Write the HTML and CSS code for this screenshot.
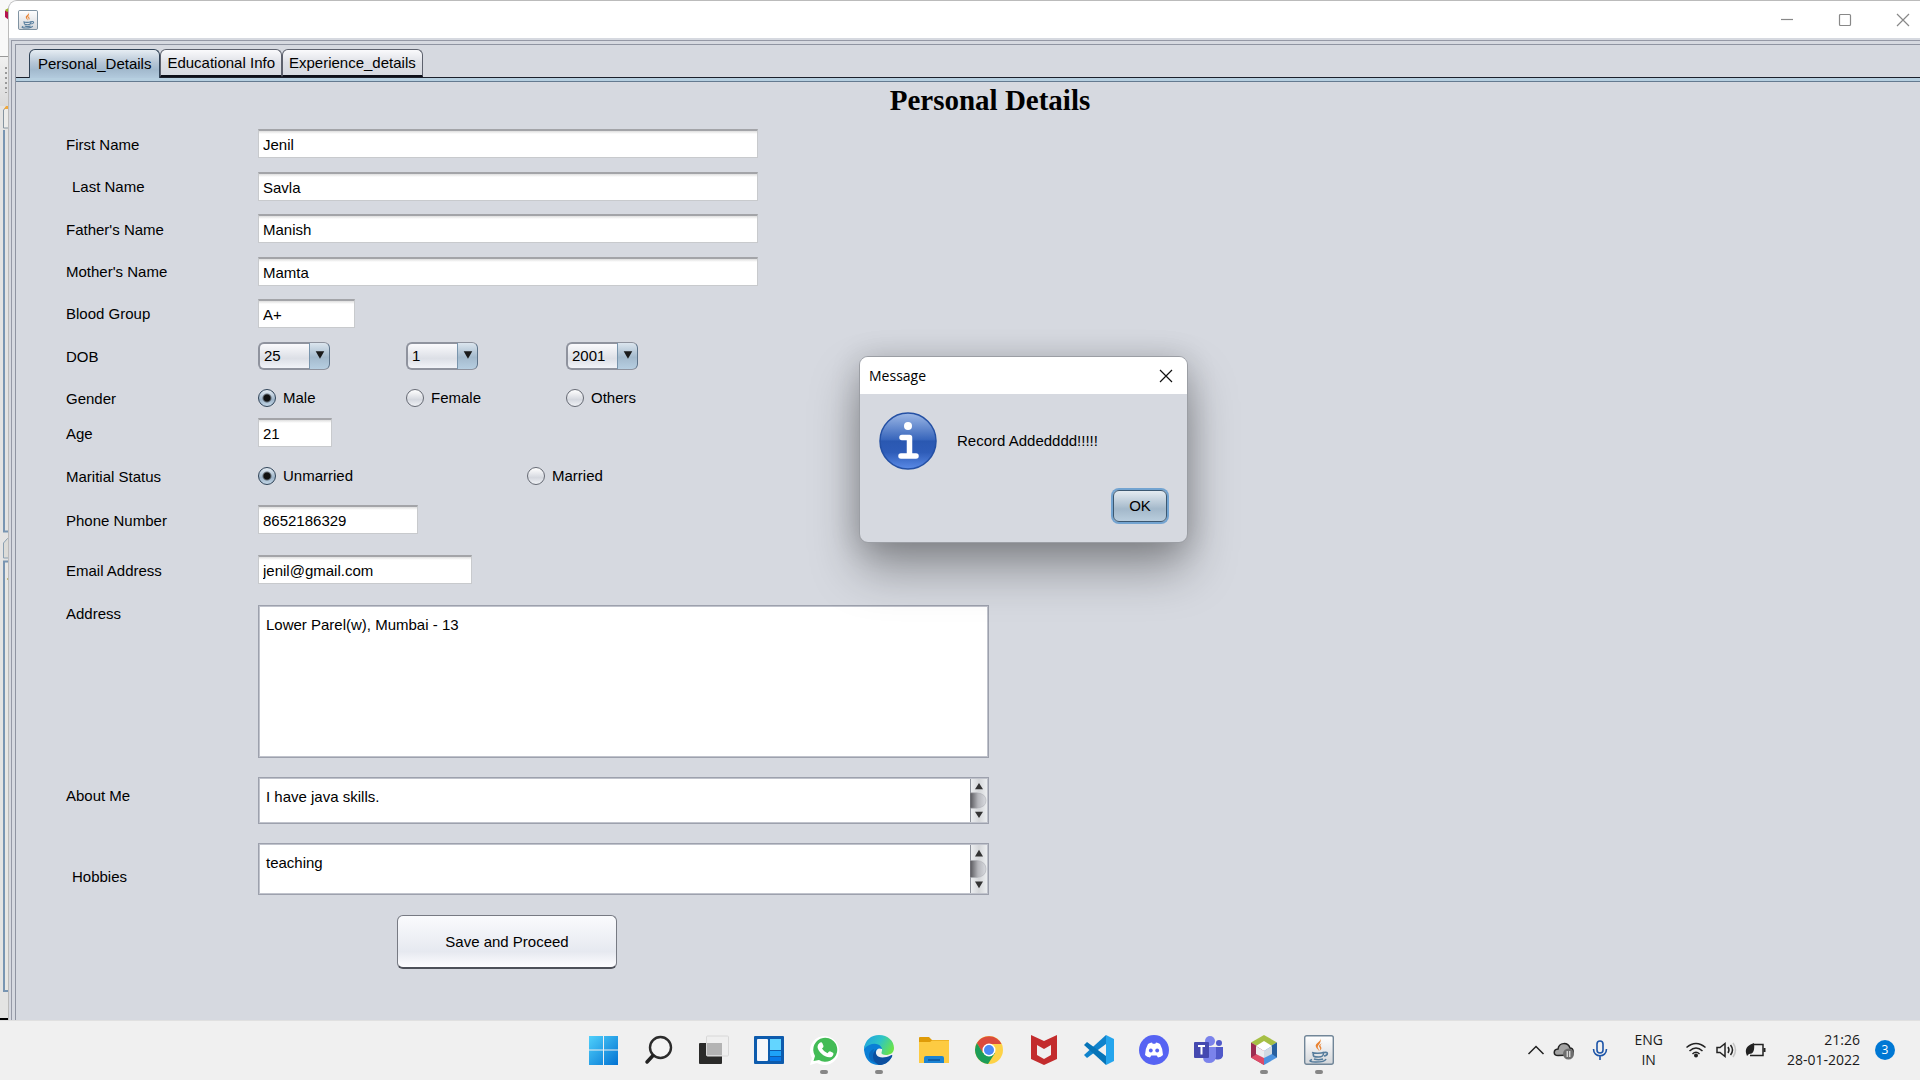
FILE: index.html
```html
<!DOCTYPE html>
<html lang="en">
<head>
<meta charset="utf-8">
<title>Personal Details</title>
<link rel="stylesheet" href="styles.css">
</head>
<body>
<div class="desktop">
  <div class="workspace">
    <div class="behind">
      <svg class="behind-art" width="20" height="1020" viewBox="0 0 20 1020" aria-hidden="true">
        <defs><linearGradient id="tb" x1="0" y1="0" x2="0" y2="1"><stop offset="0" stop-color="#f0f0f0"/><stop offset="1" stop-color="#dadada"/></linearGradient></defs>
        <rect width="20" height="1020" fill="#e4e4e3"/>
        <rect width="20" height="56" fill="#f8f8f8"/>
        <path d="M5 11l4-3v12l-4-3z" fill="#b5124e"/><path d="M5 10l7-4v4l-5 2z" fill="#9cb82e"/>
        <rect x="8" y="38" width="3" height="11" fill="#c9a57c"/>
        <rect y="56" width="20" height="1" fill="#999"/>
        <rect y="57" width="20" height="49" fill="url(#tb)"/>
        <path d="M6 67v26" stroke="#999" stroke-width="2" stroke-dasharray="2 3"/>
        <path d="M3.500 128v-18l3-3h8v21z" fill="#ececea" stroke="#8594a0"/>
        <path d="M4 109l2-3h8v3z" fill="#f0a93c"/>
        <path d="M4 130v401.500h12" fill="none" stroke="#7895b2" stroke-width="2"/>
        <path d="M3.500 558v-15l4-4.500h8v19.500z" fill="#dcdcd8" stroke="#8aa0b2"/>
        <path d="M14 561.500H4V991h12" fill="none" stroke="#7895b2" stroke-width="2"/>
        <rect x="5" y="563" width="15" height="427" fill="#e8e7e4"/>
        <path d="M8 567h1" stroke="#2b2bb5" stroke-width="2"/><path d="M7 579h2" stroke="#bab77c" stroke-width="2"/>
        <rect y="1018" width="9" height="2" fill="#000"/>
      </svg>
    </div>
    <main class="window">
      <header class="titlebar">
        <svg class="app-icon" width="20" height="20" viewBox="0 0 30 30" aria-hidden="true"><use href="#java"/></svg>
        <div class="window-controls">
          <button type="button" aria-label="Minimize"><svg width="14" height="14" viewBox="0 0 14 14"><path d="M1 6.500h12"/></svg></button>
          <button type="button" aria-label="Maximize"><svg width="14" height="14" viewBox="0 0 14 14"><rect x="1.500" y="1.500" width="11" height="11" rx="1"/></svg></button>
          <button type="button" aria-label="Close"><svg width="14" height="14" viewBox="0 0 14 14"><path d="M1 1l12 12M13 1L1 13"/></svg></button>
        </div>
      </header>
      <div class="frame">
        <div class="pane">
          <nav class="tabs" role="tablist">
            <button type="button" class="tab tab--active" role="tab" aria-selected="true">Personal_Details</button>
            <button type="button" class="tab" role="tab" aria-selected="false">Educational Info</button>
            <button type="button" class="tab" role="tab" aria-selected="false">Experience_details</button>
          </nav>
          <div class="tab-rule"></div>
          <h1 class="heading">Personal Details</h1>
          <form class="form">
            <label for="first">First Name</label>
            <input class="field w-name" id="first" type="text" value="Jenil">
            <label class="indent" for="last">Last Name</label>
            <input class="field w-name" id="last" type="text" value="Savla">
            <label for="father">Father's Name</label>
            <input class="field w-name" id="father" type="text" value="Manish">
            <label for="mother">Mother's Name</label>
            <input class="field w-name" id="mother" type="text" value="Mamta">
            <label for="blood">Blood Group</label>
            <input class="field w-blood" id="blood" type="text" value="A+">
            <label for="day">DOB</label>
            <div class="choices">
              <span class="combo"><select id="day"><option>25</option></select><svg class="combo-arrow" viewBox="0 0 20 26" aria-hidden="true"><path d="M6 8h9l-4.500 8z"/></svg></span>
              <span class="combo"><select aria-label="Month"><option>1</option></select><svg class="combo-arrow" viewBox="0 0 20 26" aria-hidden="true"><path d="M6 8h9l-4.500 8z"/></svg></span>
              <span class="combo"><select aria-label="Year"><option>2001</option></select><svg class="combo-arrow" viewBox="0 0 20 26" aria-hidden="true"><path d="M6 8h9l-4.500 8z"/></svg></span>
            </div>
            <span class="label">Gender</span>
            <div class="choices">
              <label class="option"><input type="radio" name="gender" checked>Male</label>
              <label class="option"><input type="radio" name="gender">Female</label>
              <label class="option"><input type="radio" name="gender">Others</label>
            </div>
            <label for="age">Age</label>
            <input class="field w-age" id="age" type="text" value="21">
            <span class="label">Maritial Status</span>
            <div class="choices choices--wide">
              <label class="option"><input type="radio" name="status" checked>Unmarried</label>
              <label class="option"><input type="radio" name="status">Married</label>
            </div>
            <label for="phone">Phone Number</label>
            <input class="field w-phone" id="phone" type="text" value="8652186329">
            <label for="email">Email Address</label>
            <input class="field w-email" id="email" type="text" value="jenil@gmail.com">
            <label class="top" for="address">Address</label>
            <div class="area area--tall"><textarea id="address">Lower Parel(w), Mumbai - 13</textarea></div>
            <label class="top about" for="about">About Me</label>
            <div class="area area--about"><textarea id="about">I have java skills.</textarea>
              <svg class="scroll" viewBox="0 0 18 44" preserveAspectRatio="none" aria-hidden="true"><use href="#scroll"/></svg></div>
            <label class="indent" for="hobbies">Hobbies</label>
            <div class="area area--hobbies"><textarea id="hobbies">teaching</textarea>
              <svg class="scroll" viewBox="0 0 18 44" preserveAspectRatio="none" aria-hidden="true"><use href="#scroll"/></svg></div>
            <button class="save" type="button">Save and Proceed</button>
          </form>
        </div>
      </div>
      <section class="dialog" role="dialog" aria-labelledby="dlg-title">
        <header class="dialog-bar">
          <span id="dlg-title">Message</span>
          <button type="button" aria-label="Close"><svg width="14" height="14" viewBox="0 0 14 14"><path d="M1 1l12 12M13 1L1 13"/></svg></button>
        </header>
        <div class="dialog-body">
          <svg width="58" height="58" viewBox="0 0 58 58" aria-hidden="true">
            <defs><linearGradient id="info" x1="0" y1="0" x2="0" y2="1"><stop offset="0" stop-color="#9db8e6"/><stop offset=".48" stop-color="#3765bb"/><stop offset=".5" stop-color="#2a58b1"/><stop offset=".7" stop-color="#2e5cb8"/><stop offset="1" stop-color="#5a8ae6"/></linearGradient></defs>
            <circle cx="29" cy="29" r="28" fill="url(#info)" stroke="#2450a4" stroke-width="1.500"/>
            <circle cx="29" cy="14" r="4" fill="#fff"/>
            <path d="M23 25.500h7.500V44M22 44h15" fill="none" stroke="#fff" stroke-width="5.500" stroke-linecap="round" stroke-linejoin="round"/>
          </svg>
          <p>Record Addedddd!!!!!</p>
        </div>
        <footer class="dialog-foot"><button class="ok" type="button">OK</button></footer>
      </section>
    </main>
  </div>

  <footer class="taskbar">
    <div class="apps">
      <button type="button" aria-label="Start"><svg viewBox="0 0 30 30"><defs><linearGradient id="win" x1="0" y1="0" x2="1" y2="1"><stop offset="0" stop-color="#4fd0fb"/><stop offset="1" stop-color="#0272d2"/></linearGradient></defs><path fill="url(#win)" d="M0 1h14v13.500H0zM15 1h14v13.500H15zM0 15.500h14V30H0zM15 15.500h14V30H15z"/></svg></button>
      <button type="button" aria-label="Search"><svg viewBox="0 0 30 30"><circle cx="16.500" cy="12.500" r="10.500" fill="#f4f4f4" stroke="#2c2c2c" stroke-width="2.400"/><path d="M9 20.500l-6 6.500" stroke="#222" stroke-width="3.500" stroke-linecap="round"/></svg></button>
      <button type="button" aria-label="Task view"><svg viewBox="0 0 30 30"><rect y="8" width="23" height="21" rx="1" fill="#2a2a29"/><rect x="7.500" y="1" width="22" height="20" rx="1" fill="#eee" fill-opacity=".88" stroke="#d8d8d8"/><path d="M8 8h15v12H8z" fill="#aaa" fill-opacity=".8"/></svg></button>
      <button type="button" aria-label="Widgets"><svg viewBox="0 0 30 30"><rect y="1" width="30" height="28" rx="1" fill="#0d5bad"/><rect x="3" y="4" width="11" height="22" rx="1" fill="#f5f6fa"/><path fill="#63d5ff" d="M16 4h11v11H16z"/><path fill="#1da2f8" d="M16 16h11v5H16z"/><path fill="#0879e8" d="M16 22h11v4H16z"/></svg></button>
      <button type="button" class="running" aria-label="WhatsApp"><svg viewBox="0 0 30 30"><path d="M1 30l2-7A14.500 14.500 0 1 1 8 28z" fill="#fff"/><path d="M4.500 26l1.500-5A12 12 0 1 1 10 25z" fill="#43bc56"/><path d="M10.500 8q2-1.500 3 .5l1 2.500q.3 1-1.500 2.500 2 3.500 5.500 4.800 1.800-2.500 3-1.800l2.500 1.200c1 .6.200 3.300-1.500 4.200C17 24 9 17 8.500 12q0-2.500 2-4z" fill="#fff"/></svg></button>
      <button type="button" class="running" aria-label="Edge"><svg viewBox="0 0 30 30"><defs><linearGradient id="eg" x1="0" y1=".2" x2="1" y2=".6"><stop offset="0" stop-color="#1fa3e0"/><stop offset=".5" stop-color="#2ec4c6"/><stop offset="1" stop-color="#6be448"/></linearGradient></defs><path d="M0 15C0 6 8 5 14 8q5 3 4 6-5-2-6 3-1 8 8 8 4 0 8-3Q23 30 15 30 2 30 0 15z" fill="#0a7fd6"/><path d="M10 14c-2 5 1 12 9 13-7 3-14-1-14-6 0-4 2-6 5-7z" fill="#0a68bd"/><path d="M12.500 14c-3 6 3 12 15 6 1.500 0 .5 2 0 2.500C23 30 17 30 15 30 8 27 7 18 12.500 14z" fill="#0c4f9f"/><path d="M0 14C1 5 7 0 15 0c9 0 15 6 15 13 0 5-4 7-8 7-3 0-5-1-4.500-2.500C21 10 9 4 0 14z" fill="url(#eg)"/></svg></button>
      <button type="button" aria-label="File Explorer"><svg viewBox="0 0 30 30"><path d="M0 3q0-1 1-1h9l3 3h17v8H0z" fill="#df9b08"/><path d="M0 7h11l2-1.500h17V28H0z" fill="#fdcb42"/><path d="M5 28v-5q0-2 2-2h16q2 0 2 2v5z" fill="#1b83d3"/><path d="M9 25h12" stroke="#0b5299" stroke-width="1.500"/></svg></button>
      <button type="button" aria-label="Chrome"><svg viewBox="0 0 30 30"><circle cx="15" cy="15" r="14" fill="#fdd247"/><path d="M2.900 8A14 14 0 0 1 27.500 9H15L8 17z" fill="#db4b3c"/><path d="M2.900 8A14 14 0 0 0 14 29l7-11H9z" fill="#1c9d58"/><circle cx="15" cy="15" r="6.500" fill="#fff"/><circle cx="15" cy="15" r="5" fill="#4a8af4"/></svg></button>
      <button type="button" aria-label="McAfee"><svg viewBox="0 0 30 30"><path fill="#c32c2d" fill-rule="evenodd" d="M2 0l13 6 13-6v24l-13 6-13-6zM8 10v10l7 4 7-4V10l-7 4z"/></svg></button>
      <button type="button" aria-label="Visual Studio Code"><svg viewBox="0 0 30 30"><path d="M22 0L0 20l3 3 19-14z" fill="#1083cc"/><path d="M22 30L0 10l3-3 19 14z" fill="#0674b8"/><path d="M22 0l8 4v22l-8 4z" fill="#25a5ed"/></svg></button>
      <button type="button" aria-label="Discord"><svg viewBox="0 0 30 30"><circle cx="15" cy="15" r="15" fill="#5663f3"/><path d="M9 9q2-1.500 4-1.500l.7 1.200h2.600l.7-1.200q2 0 4 1.500 3 5 3 11-2 2-5 2.500l-1.300-2h-5.400l-1.300 2Q8 22 6 20q0-6 3-11z" fill="#fff"/><circle cx="11.800" cy="15.500" r="1.900" fill="#5663f3"/><circle cx="18.200" cy="15.500" r="1.900" fill="#5663f3"/></svg></button>
      <button type="button" aria-label="Teams"><svg viewBox="0 0 30 30"><circle cx="16" cy="6" r="5" fill="#7b83eb"/><circle cx="25" cy="8" r="3" fill="#5059c9"/><path d="M20 12h9v9q-2 5-8 3z" fill="#5059c9"/><path d="M9 12h13v10q-1 6-7 6t-6-6z" fill="#7b83eb"/><rect y="7" width="15" height="16" rx="1" fill="#4549b0"/><path d="M4 11h7M7.500 11v8.500" stroke="#fff" stroke-width="2"/></svg></button>
      <button type="button" class="running" aria-label="NetBeans"><svg viewBox="0 0 30 30"><path d="M15 0l13 7.500-13 7.500L2 7.500z" fill="#a6bf45"/><path d="M2 7.500L15 15v15L2 22.500z" fill="#9c2b51"/><path d="M2 22.500l13-7.500v15z" fill="#de4a67"/><path d="M28 7.500v15L15 30V15z" fill="#4c92df"/><path d="M28 7.500v15l-6-4V11z" fill="#285f9e"/><path d="M15 6l8 5-8 5-8-5z" fill="#fff"/><path d="M7 11l8 5v7l-8-4z" fill="#ececef"/><path d="M23 11l-8 5v7l8-4z" fill="#d2dae2"/></svg></button>
      <button type="button" class="running" aria-label="Java">
        <svg viewBox="0 0 30 30"><defs>
          <linearGradient id="jv" x1="0" y1="0" x2="0" y2="1"><stop offset="0" stop-color="#fff"/><stop offset="1" stop-color="#d3d6da"/></linearGradient>
          <g id="java"><rect x=".7" y=".7" width="28.600" height="28.600" rx="2" fill="url(#jv)" stroke="#718698" stroke-width="1.400"/><path d="M16 3c2 4-6 5-4 9 .5 1.500 2 2 3 4 0-3-2-3-1-5s4-4 2-8zM18.500 8c-4 2-4 3-2.500 5 .5 1.500 0 2-1 3 4-2 2-4 1.500-5s.5-2 2-3z" fill="#e98332"/><path d="M8 17.500c3 1.200 9 1 12-.3M9.500 18c-1 4 1 4 5 4s5-1 5-4M20 17.500c5-1 4 3 0 3.500M8 24.500c-8 3 12 4 14-.5M10 24c3 1 6 1 9 0" fill="none" stroke="#557c9c" stroke-width="1.600"/></g>
          <linearGradient id="thumb"><stop offset="0" stop-color="#55555a"/><stop offset=".5" stop-color="#b4b5ba"/><stop offset="1" stop-color="#d8dadf"/></linearGradient>
          <linearGradient id="track"><stop offset="0" stop-color="#eff1f3"/><stop offset=".5" stop-color="#d5d7da"/><stop offset="1" stop-color="#eff1f3"/></linearGradient>
          <g id="scroll"><path d="M0 0h18v44H0z" fill="url(#track)"/><path d="M.5 0v44" stroke="#8f939c"/><path d="M0 14.500h7q9 1 9 7.500t-9 7.500H0z" fill="url(#thumb)" stroke="#aaacb2" stroke-width=".5"/><path d="M5 11h8L9 5zM5 33h8l-4 6z" fill="#333"/></g>
        </defs><use href="#java"/></svg></button>
    </div>
    <div class="tray">
      <svg width="18" height="20" viewBox="0 0 18 20"><path class="line" d="M1.500 14L9 6.500l7.500 7.500"/></svg>
      <svg width="22" height="20" viewBox="0 0 22 20"><path d="M5 15.500c-5 0-5-6 0-6.500 1-7 10-7 12-1 4 0 4 6 1 7z" fill="#a3a3a3" stroke="#222" stroke-width="1.500"/><circle cx="15.500" cy="14" r="5.500" fill="#6e6e6e"/><path d="M14.200 11v6M16.800 11v6" stroke="#fff"/></svg>
      <svg class="mic" width="16" height="20" viewBox="0 0 16 20"><rect x="5" y="1" width="6" height="12" rx="3"/><path d="M1.500 9c0 9 13 9 13 0M8 15.500V20"/></svg>
      <div class="lang">ENG<br>IN</div>
      <svg width="22" height="20" viewBox="0 0 22 20"><g class="line"><path d="M1.500 7.500Q11-.5 20.500 7.500M4.500 11q6.500-6 13 0M7.500 14q3.500-3.500 7 0"/></g><circle cx="11" cy="15.500" r="2" fill="#222"/></svg>
      <svg width="22" height="20" viewBox="0 0 22 20"><path class="line" d="M2 7.500h3l5-4v13l-5-4H2zM13 7q2 3 0 6M15.500 5q4 5 0 10"/><path d="M18 3q5 7 0 14" fill="none" stroke="#c4c4c4" stroke-width="1.500"/></svg>
      <svg width="22" height="20" viewBox="0 0 22 20"><path class="line" d="M9 4.500h9v11H5"/><path d="M18.500 8h2v4h-2zM1 13C0 7 4 5 9 3c1 8-1 11-5 11l-2 2z" fill="#222"/></svg>
      <div class="clock">21:26<br>28-01-2022</div>
      <span class="badge">3</span>
    </div>
  </footer>
</div>
</body>
</html>
```
FILE: styles.css
```css
* { box-sizing: border-box; }
body {
  margin: 0;
  font: 15px/18px "Liberation Sans", Arial, sans-serif;
  color: #000;
  background: #d6d9e0;
}
button, input, select, textarea { font: inherit; color: inherit; }
button { cursor: pointer; }
.desktop { display: flex; flex-direction: column; min-height: 100vh; overflow: hidden; }
.workspace { display: flex; flex: 1; }

/* Sliver of the application behind the form window */
.behind { position: relative; width: 8px; background: #e4e4e3; }
.behind-art { position: absolute; top: 0; left: 0; }

.window {
  position: relative;
  flex: 1;
  display: flex;
  flex-direction: column;
  border: solid #bbb;
  border-width: 1px 0 0 1px;
  border-top-left-radius: 9px;
  background: #d6d9e0;
}
.titlebar {
  display: flex;
  justify-content: space-between;
  align-items: center;
  height: 37px;
  padding-left: 9px;
  background: #fff;
  border-top-left-radius: 8px;
}
.window-controls { display: flex; gap: 12px; }
.window-controls button {
  width: 46px;
  height: 36px;
  padding: 0;
  border: 0;
  background: none;
}
.window-controls button:last-child { width: 34px; margin-left: 6px; }
.window-controls svg { display: block; margin: auto; fill: none; stroke: #888; stroke-width: 1.2; }

.frame {
  flex: 1;
  display: flex;
  margin: 2px 0 0 2px;
  padding: 3px 0 0 3px;
  border: solid #9599a6;
  border-width: 1px 0 0 1px;
}
.pane { flex: 1; border: solid #8f94a1; border-width: 1px 0 0 1px; }

.tabs { display: flex; height: 33px; padding: 4px 0 0 13px; border-bottom: 1px solid #1c202b; }
.tab {
  height: 28px;
  padding: 1px 6px 0;
  border: 1px solid #5d616d;
  border-bottom: 2px solid #0c0e18;
  border-radius: 6px 6px 0 0;
  background: linear-gradient(#fafafc, #dfe1e7 50%, #d6d9e0);
  white-space: nowrap;
}
.tab--active {
  height: 29px;
  padding: 0 8px;
  border-color: #2f4155;
  border-bottom: 0;
  background: linear-gradient(#e6edf3, #b6c6d6 45%, #a2b9cd 70%, #b2cadd);
}
.tab-rule { height: 4px; background: #b6cfe0; border-bottom: 1px solid #647a90; }

.heading {
  margin: 0;
  padding: 2px 0 0 44px;
  font: bold 29px/32px "Liberation Serif", "Times New Roman", serif;
  text-align: center;
}
.form {
  display: grid;
  grid-template-columns: 192px minmax(0, 1fr);
  grid-template-rows: 43px 42px 43px 42px 42px 43px 41px 29px 58px 29px 71px 172px 66px 66px 60px;
  align-items: center;
  padding: 6px 0 0 50px;
}
.form > label, .form > .label { padding-top: 2px; }
.form > .indent { padding-left: 6px; }
.form > .top { align-self: start; padding-top: 0; }
.form > .about { padding-top: 10px; }
.field {
  height: 29px;
  padding: 1px 4px 0;
  border: 1px solid #c8cacd;
  border-top: 2px solid #a3a4a8;
  background: linear-gradient(#dedede, #fff 3px);
  outline: 0;
}
.w-name { width: 500px; }
.w-blood { width: 97px; }
.w-age { width: 74px; }
.w-phone { width: 160px; }
.w-email { width: 214px; }

.choices { display: grid; grid-template-columns: 148px 160px 148px; align-items: center; }
.choices--wide { grid-template-columns: 269px 148px; }
.combo { position: relative; width: 72px; height: 28px; }
.combo select {
  appearance: none;
  width: 100%;
  height: 100%;
  padding: 0 0 0 4px;
  border: 2px solid #8f939e;
  border-right-color: #5d7389;
  border-radius: 6px;
  background: linear-gradient(#fafafc, #dcdfe6 60%, #f1f3f8);
}
.combo-arrow {
  position: absolute;
  top: 1px;
  right: 1px;
  width: 20px;
  height: 26px;
  border-left: 1px solid #7995ad;
  border-radius: 0 5px 5px 0;
  background: linear-gradient(#dbe5ee, #a4bacd 55%, #b6cee1);
  pointer-events: none;
  fill: #1a1a1a;
}
.option { display: flex; align-items: center; gap: 7px; }
.option input {
  appearance: none;
  width: 18px;
  height: 18px;
  margin: 0;
  border: 1px solid #666a74;
  border-radius: 50%;
  background: linear-gradient(#fff, #d5d8df 60%, #f0f2f6);
}
.option input:checked {
  border-color: #2f4358;
  background: radial-gradient(circle, #111 3px, transparent 5px), linear-gradient(#e4ecf3, #9db4c9 60%, #c2d6e6);
}

.area {
  display: flex;
  align-self: start;
  width: 731px;
  max-width: 100%;
  border: 1px solid #9da1ad;
  outline: 1px solid #c0c3cc;
  outline-offset: -2px;
  background: #fff;
}
.area--tall { height: 153px; }
.area--about { height: 47px; }
.area--hobbies { height: 52px; }
.area textarea {
  flex: 1;
  padding: 10px 7px 0;
  border: 0;
  outline: 0;
  resize: none;
  overflow: hidden;
  background: none;
}
.scroll { width: 18px; height: 100%; }
.save {
  grid-column: 2;
  align-self: end;
  width: 220px;
  height: 54px;
  margin-left: 139px;
  border: 1px solid #777a83;
  border-bottom: 2px solid #4d5059;
  border-radius: 6px;
  background: linear-gradient(#fafbfd, #e6e9f0 70%, #fdfdff);
}

.dialog {
  position: absolute;
  top: 355px;
  left: 850px;
  width: 329px;
  border: 1px solid #9b9ea4;
  border-radius: 9px;
  background: #d6d9e0;
  box-shadow: 0 26px 48px 0 rgba(0, 0, 0, .34), 0 2px 30px rgba(0, 0, 0, .16);
}
.dialog-bar {
  display: flex;
  justify-content: space-between;
  align-items: center;
  height: 37px;
  padding: 0 14px 0 9px;
  border-radius: 8px 8px 0 0;
  background: #fff;
  font-family: "Open Sans", "Noto Sans", sans-serif;
  font-size: 14px;
}
.dialog-bar button { padding: 0; border: 0; background: none; }
.dialog-bar svg { display: block; fill: none; stroke: #111; stroke-width: 1.2; }
.dialog-body { display: flex; align-items: center; gap: 20px; padding: 18px 19px 0; }
.dialog-body p { margin: 0; }
.dialog-foot { display: flex; justify-content: flex-end; padding: 20px; }
.ok {
  width: 54px;
  height: 32px;
  padding: 0;
  border: 1px solid #3c5871;
  border-radius: 6px;
  background: linear-gradient(#e4ebf1, #a3b8ca 60%, #b9cddd);
  box-shadow: 0 0 0 2px #73a4d1;
}

.taskbar {
  display: grid;
  grid-template-columns: 1fr auto 1fr;
  align-items: center;
  height: 60px;
  padding-bottom: 1px;
  border-top: 1px solid #e0e0e0;
  background: #f0f0f0;
  font-family: "Open Sans", "Noto Sans", sans-serif;
  font-size: 14px;
  line-height: 20px;
  color: #1a1a1a;
}
.apps { grid-column: 2; display: flex; padding-left: 2px; }
.apps button {
  position: relative;
  width: 55px;
  height: 58px;
  padding: 0;
  border: 0;
  background: none;
}
.apps svg { display: block; width: 30px; height: 30px; margin: auto; }
.running::after {
  content: "";
  position: absolute;
  bottom: 5px;
  left: 24px;
  width: 8px;
  height: 4px;
  border-radius: 2px;
  background: #868686;
}
.tray { display: flex; justify-content: flex-end; align-items: center; padding-right: 25px; }
.tray .line { fill: none; stroke: #222; stroke-width: 1.5; }
.tray svg + svg { margin-left: 8px; }
.tray svg.mic { margin: 0 26px 0 17px; fill: none; stroke: #1c54a8; stroke-width: 1.6; }
.lang { margin-right: 22px; text-align: center; }
.clock { margin: 0 15px 0 20px; text-align: right; }
.badge {
  width: 20px;
  height: 20px;
  border-radius: 50%;
  background: #0078d4;
  color: #fff;
  font-size: 12px;
  text-align: center;
}
```
